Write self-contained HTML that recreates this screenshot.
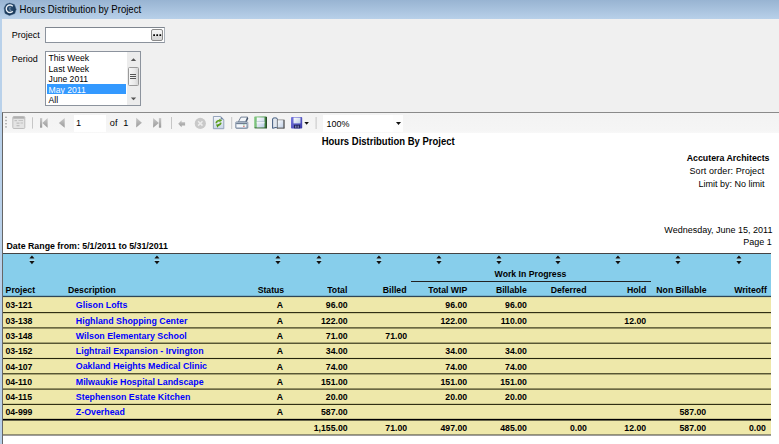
<!DOCTYPE html><html><head><meta charset="utf-8"><style>
*{margin:0;padding:0;box-sizing:border-box}
html,body{width:779px;height:444px;overflow:hidden;background:#fff;font-family:"Liberation Sans",sans-serif}
.t{position:absolute;white-space:nowrap}
.a{position:absolute}
</style></head><body>
<div class="a" style="left:0;top:0;width:779px;height:444px;background:#b9d1ea"></div>
<div class="a" style="left:0;top:0;width:779px;height:19px;background:linear-gradient(#98b4d2,#b8d0e9)"></div>
<svg class="a" style="left:0;top:0" width="20" height="19" viewBox="0 0 20 19"><defs><radialGradient id="ic" cx="0.45" cy="0.4" r="0.7"><stop offset="0" stop-color="#2f5479"/><stop offset="1" stop-color="#0f2d4d"/></radialGradient></defs><polygon points="9.6,3.1 14.4,4.6 16.1,9.2 14.8,13.6 9.4,15.5 5,13.4 4.1,8 6.1,4.3" fill="url(#ic)" stroke="#3d5d7d" stroke-width="0.5" stroke-linejoin="round"/><path d="M12.8,6.2 A3.75,3.75 0 1 0 12.8,11.2" stroke="#e9eff5" stroke-width="1.4" fill="none"/><path d="M10.2,6.9 q-0.9,1.8 0,3.8 h1.2" stroke="#9fb0c2" stroke-width="0.8" fill="none"/></svg>
<div class="t" style="left:19.6px;top:5.42px;font-size:9.6px;line-height:9.6px;font-weight:normal;color:#000;transform:scaleY(1.1);transform-origin:0 8.13px;">Hours Distribution by Project</div>
<div class="a" style="left:2px;top:19px;width:777px;height:425px;background:#f0f0f0"></div>
<div class="t" style="left:11.8px;top:30.78px;font-size:9.0px;line-height:9.0px;font-weight:normal;color:#000;transform:scaleY(1.08);transform-origin:0 7.62px;">Project</div>
<div class="t" style="left:11.8px;top:54.58px;font-size:9.0px;line-height:9.0px;font-weight:normal;color:#000;transform:scaleY(1.06);transform-origin:0 7.62px;">Period</div>
<div class="a" style="left:45px;top:27px;width:120px;height:16px;background:#fff;border:1px solid #8c939d;border-top-color:#7f868f;border-right-color:#a9b0b8"></div>
<div class="a" style="left:151.2px;top:28.7px;width:12.1px;height:12px;border:1px solid #8a8a8a;border-radius:2px;background:linear-gradient(#f5f5f5,#ececec 55%,#dadada 56%,#d8d8d8)"></div>
<svg class="a" style="left:150px;top:30px" width="15" height="10" viewBox="150 30 15 10"><g fill="#000"><rect x="153.2" y="34.2" width="1.8" height="1.9" rx="0.4"/><rect x="156.3" y="34.2" width="1.8" height="1.9" rx="0.4"/><rect x="159.4" y="34.2" width="1.8" height="1.9" rx="0.4"/></g></svg>
<div class="a" style="left:45px;top:51px;width:96px;height:55px;background:#fff;border:1px solid #8c939d"></div>
<div class="a" style="left:47px;top:84px;width:79px;height:10px;background:#3399ff"></div>
<div class="t" style="left:48.6px;top:54.02px;font-size:8.6px;line-height:8.6px;font-weight:normal;color:#000;transform:scaleY(1.12);transform-origin:0 7.28px;">This Week</div>
<div class="t" style="left:48.6px;top:64.52px;font-size:8.6px;line-height:8.6px;font-weight:normal;color:#000;transform:scaleY(1.12);transform-origin:0 7.28px;">Last Week</div>
<div class="t" style="left:48.6px;top:75.02px;font-size:8.6px;line-height:8.6px;font-weight:normal;color:#000;transform:scaleY(1.12);transform-origin:0 7.28px;">June 2011</div>
<div class="t" style="left:48.6px;top:85.52px;font-size:8.6px;line-height:8.6px;font-weight:normal;color:#fff;transform:scaleY(1.12);transform-origin:0 7.28px;">May 2011</div>
<div class="t" style="left:48.6px;top:96.02px;font-size:8.6px;line-height:8.6px;font-weight:normal;color:#000;transform:scaleY(1.12);transform-origin:0 7.28px;">All</div>
<div class="a" style="left:127px;top:52px;width:13px;height:53px;background:#ececec"></div>
<div class="a" style="left:127.5px;top:67px;width:11px;height:18.7px;border:1px solid #9a9a9a;border-radius:1.5px;background:linear-gradient(90deg,#f6f6f6,#e9e9e9 60%,#d6d6d6)"></div>
<div class="a" style="left:130px;top:73.5px;width:5.5px;height:0.9px;background:#555"></div><div class="a" style="left:130px;top:75.6px;width:5.5px;height:0.9px;background:#555"></div><div class="a" style="left:130px;top:77.7px;width:5.5px;height:0.9px;background:#555"></div>
<svg class="a" style="left:128px;top:56px" width="11" height="8"><polygon points="2.8,5 5.5,2.3 8.2,5" fill="#555"/></svg>
<svg class="a" style="left:128px;top:95px" width="11" height="8"><polygon points="2.8,2.6 5.5,5.3 8.2,2.6" fill="#555"/></svg>
<div class="a" style="left:2px;top:112px;width:777px;height:332px;background:#fff;border-left:1px solid #666;border-top:1px solid #8a8a8a"></div>
<div class="a" style="left:3px;top:113px;width:776px;height:20px;background:linear-gradient(#f3f3f3,#f5f5f5 85%,#f8f8f8)"></div>
<div class="a" style="left:74px;top:114.6px;width:32px;height:17.7px;background:#fff"></div>
<div class="a" style="left:323.4px;top:114.5px;width:80px;height:17.2px;background:#fdfdfd"></div>
<div class="a" style="left:323.4px;top:114.5px;width:70px;height:17.2px;background:#fff"></div>
<div class="t" style="left:76.0px;top:118.61px;font-size:9.2px;line-height:9.2px;font-weight:normal;color:#000;transform:scaleY(1.06);transform-origin:0 7.79px;">1</div>
<div class="t" style="left:109.8px;top:118.61px;font-size:9.2px;line-height:9.2px;font-weight:normal;color:#000;transform:scaleY(1.08);transform-origin:0 7.79px;">of</div>
<div class="t" style="left:123.2px;top:118.61px;font-size:9.2px;line-height:9.2px;font-weight:normal;color:#000;transform:scaleY(1.06);transform-origin:0 7.79px;">1</div>
<div class="t" style="left:326.6px;top:119.68px;font-size:9.0px;line-height:9.0px;font-weight:normal;color:#000;transform:scaleY(1.1);transform-origin:0 7.62px;">100%</div>
<svg class="a" style="left:0;top:0" width="420" height="140" viewBox="0 0 420 140">
<defs>
<linearGradient id="gg" x1="0" y1="0" x2="0" y2="1"><stop offset="0" stop-color="#c8c8c8"/><stop offset="1" stop-color="#9a9a9a"/></linearGradient>
<linearGradient id="pb" x1="0" y1="0" x2="0" y2="1"><stop offset="0" stop-color="#f4f7fb"/><stop offset="1" stop-color="#c9d6e8"/></linearGradient>
</defs>
<g fill="#9c9c9c"><rect x="5.3" y="116.6" width="1.4" height="1.4"/><rect x="5.3" y="119.8" width="1.4" height="1.4"/><rect x="5.3" y="123" width="1.4" height="1.4"/><rect x="5.3" y="126.2" width="1.4" height="1.4"/></g>
<rect x="12.8" y="116.5" width="12" height="12" rx="1" fill="#e4e4e4" stroke="#b8b8b8" stroke-width="0.9"/>
<rect x="13.2" y="116.9" width="11.2" height="1.8" fill="#b0b0b0"/>
<g fill="#c0c0c0"><rect x="14.5" y="120" width="2.5" height="1.2"/><rect x="18.5" y="120" width="4.5" height="0.9"/><rect x="16.5" y="122.5" width="3" height="1.3"/><rect x="20.5" y="122.5" width="2.5" height="1"/><rect x="16.5" y="125" width="3" height="1.3"/></g>
<g fill="#c6c6c6"><rect x="32" y="117.3" width="1" height="11.3"/><rect x="171" y="117" width="1" height="12"/><rect x="231.2" y="117" width="1" height="12"/><rect x="315.6" y="117" width="1" height="12"/></g>
<g fill="url(#gg)">
<rect x="40" y="118.1" width="2.2" height="9.6"/><polygon points="47.6,118.1 42.3,122.9 47.6,127.7"/>
<polygon points="64.7,118.1 58.8,122.9 64.7,127.7"/>
<polygon points="136.2,117.8 141.9,122.7 136.2,127.6"/>
<polygon points="153.1,118.1 158.9,122.9 153.1,127.7"/><rect x="158.9" y="118.1" width="2.3" height="9.6"/>
<polygon points="178.2,123.8 181.6,120.3 181.6,122.2 185.1,122.2 185.1,125.4 181.6,125.4 181.6,127.3"/>
</g>
<circle cx="200.3" cy="123.4" r="5.6" fill="#c9c9c9"/>
<path d="M198.1,121.2 L202.5,125.6 M202.5,121.2 L198.1,125.6" stroke="#ececec" stroke-width="1.5"/>
<path d="M213.4,116.5 h7.3 l3.1,3.1 v9.1 h-10.4 z" fill="url(#pb)" stroke="#8c9cb4" stroke-width="0.9"/>
<polygon points="220.7,116.5 223.8,119.6 220.7,119.6" fill="#7486a0"/>
<path d="M216.2,123.2 q0.2,-2.6 3.6,-2.7" stroke="#5e9f1e" stroke-width="1.6" fill="none"/>
<polygon points="219.4,118.7 222.1,120.5 219.4,122.3" fill="#5e9f1e"/>
<path d="M220.9,122.6 q-0.3,2.3 -3.2,2.6" stroke="#5e9f1e" stroke-width="1.6" fill="none"/>
<polygon points="215.9,124.6 219.3,124.6 217.6,127.7" fill="#4f9414"/>
<linearGradient id="prb" x1="0" y1="0" x2="0" y2="1"><stop offset="0" stop-color="#d3dce6"/><stop offset="1" stop-color="#8d9db2"/></linearGradient>
<linearGradient id="plin" x1="0" y1="0" x2="1" y2="1"><stop offset="0" stop-color="#ffffff"/><stop offset="1" stop-color="#b9cbe4"/></linearGradient>
<linearGradient id="flp" x1="0" y1="0" x2="1" y2="1"><stop offset="0" stop-color="#7878e0"/><stop offset="1" stop-color="#3a3aa8"/></linearGradient>
<linearGradient id="grn" x1="0" y1="0" x2="1" y2="0"><stop offset="0" stop-color="#86c986"/><stop offset="0.5" stop-color="#5aa95a"/><stop offset="1" stop-color="#3b7d3b"/></linearGradient>
<polygon points="240.9,117.1 247.6,117.1 245.4,121.9 238.3,121.9" fill="#f2f5f9" stroke="#55667d" stroke-width="0.8" stroke-linejoin="round"/>
<polygon points="247.4,117.2 248.3,118.2 246.6,122.2 245.6,121.9" fill="#3f4f66"/>
<rect x="235.6" y="121.7" width="12.3" height="6.8" rx="1.2" fill="url(#prb)" stroke="#6d7e95" stroke-width="0.6"/>
<rect x="236.2" y="122.2" width="11.2" height="1.9" fill="#9eacbd"/><rect x="236.2" y="123.3" width="10.8" height="0.8" fill="#5a6a80"/>
<rect x="236.6" y="124.3" width="9.6" height="3.1" fill="#f4f7fb"/>
<rect x="243.4" y="124.5" width="1" height="0.9" fill="#4fae4f"/><rect x="243.4" y="125.8" width="1" height="1.2" fill="#d23a3a"/>
<rect x="254.2" y="116.4" width="12.6" height="11.9" rx="0.8" fill="url(#grn)"/>
<rect x="265.9" y="117" width="0.9" height="11.3" fill="#1e3a1e"/>
<rect x="254.6" y="127.5" width="12.2" height="0.8" fill="#2e4e2e"/>
<rect x="256.7" y="117.4" width="7.8" height="10" fill="url(#plin)"/>
<rect x="256.7" y="121.6" width="7.8" height="0.7" fill="#9aaabb"/><rect x="256.7" y="122.3" width="7.8" height="0.9" fill="#ffffff"/>
<path d="M272.6,128.3 v-9.3 q0.2,-1.2 1.6,-1.1 h1.6 q1.4,0 1.6,1.3 v9.1 q-1.2,-1.4 -2.4,-0.6 z" fill="#e2e7ee" stroke="#2c4a70" stroke-width="0.9" stroke-linejoin="round"/>
<rect x="277.4" y="119.9" width="6.8" height="8.3" fill="url(#plin)" stroke="#6e6e6e" stroke-width="0.6"/>
<rect x="283.4" y="120" width="1" height="8.3" fill="#505050"/><rect x="277" y="127.6" width="7.4" height="0.8" fill="#606060"/>
<rect x="291" y="117" width="11.2" height="11.5" rx="0.8" fill="url(#flp)"/>
<rect x="293.5" y="117.6" width="7" height="5.8" fill="url(#plin)"/>
<rect x="294" y="124.8" width="6" height="3.5" fill="#1f2360"/><rect x="295.2" y="125.6" width="1.2" height="2.2" fill="#8a8fb8"/><rect x="297.6" y="125.6" width="1.2" height="2.2" fill="#8a8fb8"/>
<polygon points="304.4,122 308.9,122 306.65,124.7" fill="#111"/>
<polygon points="396,121.9 401,121.9 398.5,124.9" fill="#111"/>
</svg>
<div class="t" style="left:321.7px;top:136.96px;font-size:9.5px;line-height:9.5px;font-weight:bold;color:#000;transform:scaleY(1.1);transform-origin:0 8.04px;">Hours Distribution By Project</div>
<div class="t" style="right:9.5px;top:153.85px;font-size:8.8px;line-height:8.8px;font-weight:bold;color:#000;transform:scaleY(1.1);transform-origin:0 7.45px;">Accutera Architects</div>
<div class="t" style="right:14.600000000000023px;top:167.28px;font-size:9.0px;line-height:9.0px;font-weight:normal;color:#000;letter-spacing:0.1px;transform:scaleY(1.1);transform-origin:0 7.62px;">Sort order: Project</div>
<div class="t" style="right:14.600000000000023px;top:180.28px;font-size:9.0px;line-height:9.0px;font-weight:normal;color:#000;transform:scaleY(1.1);transform-origin:0 7.62px;">Limit by: No limit</div>
<div class="t" style="right:6.600000000000023px;top:226.38px;font-size:9.0px;line-height:9.0px;font-weight:normal;color:#000;transform:scaleY(1.1);transform-origin:0 7.62px;">Wednesday, June 15, 2011</div>
<div class="t" style="right:7.2999999999999545px;top:238.18px;font-size:9.0px;line-height:9.0px;font-weight:normal;color:#000;transform:scaleY(1.1);transform-origin:0 7.62px;">Page 1</div>
<div class="t" style="left:6.5px;top:241.95px;font-size:8.8px;line-height:8.8px;font-weight:bold;color:#000;transform:scaleY(1.1);transform-origin:0 7.45px;">Date Range from: 5/1/2011 to 5/31/2011</div>
<div class="a" style="left:3px;top:253px;width:768px;height:44px;background:#87ceeb;border-top:1px solid #444"></div>
<div class="a" style="left:3px;top:297px;width:768px;height:138px;background:#eee8aa"></div>
<svg class="a" style="left:29.2px;top:255px" width="6" height="10"><rect x="0" y="3.4" width="6" height="0.7" fill="#fff" fill-opacity="0.45"/><rect x="0" y="5.4" width="6" height="0.7" fill="#fff" fill-opacity="0.45"/><polygon points="0.3,3.5 2.95,0.6 5.6,3.5" fill="#111"/><polygon points="0.3,6.1 5.6,6.1 2.95,9.2" fill="#111"/></svg>
<svg class="a" style="left:154.0px;top:255px" width="6" height="10"><rect x="0" y="3.4" width="6" height="0.7" fill="#fff" fill-opacity="0.45"/><rect x="0" y="5.4" width="6" height="0.7" fill="#fff" fill-opacity="0.45"/><polygon points="0.3,3.5 2.95,0.6 5.6,3.5" fill="#111"/><polygon points="0.3,6.1 5.6,6.1 2.95,9.2" fill="#111"/></svg>
<svg class="a" style="left:275.2px;top:255px" width="6" height="10"><rect x="0" y="3.4" width="6" height="0.7" fill="#fff" fill-opacity="0.45"/><rect x="0" y="5.4" width="6" height="0.7" fill="#fff" fill-opacity="0.45"/><polygon points="0.3,3.5 2.95,0.6 5.6,3.5" fill="#111"/><polygon points="0.3,6.1 5.6,6.1 2.95,9.2" fill="#111"/></svg>
<svg class="a" style="left:316.0px;top:255px" width="6" height="10"><rect x="0" y="3.4" width="6" height="0.7" fill="#fff" fill-opacity="0.45"/><rect x="0" y="5.4" width="6" height="0.7" fill="#fff" fill-opacity="0.45"/><polygon points="0.3,3.5 2.95,0.6 5.6,3.5" fill="#111"/><polygon points="0.3,6.1 5.6,6.1 2.95,9.2" fill="#111"/></svg>
<svg class="a" style="left:375.9px;top:255px" width="6" height="10"><rect x="0" y="3.4" width="6" height="0.7" fill="#fff" fill-opacity="0.45"/><rect x="0" y="5.4" width="6" height="0.7" fill="#fff" fill-opacity="0.45"/><polygon points="0.3,3.5 2.95,0.6 5.6,3.5" fill="#111"/><polygon points="0.3,6.1 5.6,6.1 2.95,9.2" fill="#111"/></svg>
<svg class="a" style="left:436.0px;top:255px" width="6" height="10"><rect x="0" y="3.4" width="6" height="0.7" fill="#fff" fill-opacity="0.45"/><rect x="0" y="5.4" width="6" height="0.7" fill="#fff" fill-opacity="0.45"/><polygon points="0.3,3.5 2.95,0.6 5.6,3.5" fill="#111"/><polygon points="0.3,6.1 5.6,6.1 2.95,9.2" fill="#111"/></svg>
<svg class="a" style="left:495.9px;top:255px" width="6" height="10"><rect x="0" y="3.4" width="6" height="0.7" fill="#fff" fill-opacity="0.45"/><rect x="0" y="5.4" width="6" height="0.7" fill="#fff" fill-opacity="0.45"/><polygon points="0.3,3.5 2.95,0.6 5.6,3.5" fill="#111"/><polygon points="0.3,6.1 5.6,6.1 2.95,9.2" fill="#111"/></svg>
<svg class="a" style="left:555.3px;top:255px" width="6" height="10"><rect x="0" y="3.4" width="6" height="0.7" fill="#fff" fill-opacity="0.45"/><rect x="0" y="5.4" width="6" height="0.7" fill="#fff" fill-opacity="0.45"/><polygon points="0.3,3.5 2.95,0.6 5.6,3.5" fill="#111"/><polygon points="0.3,6.1 5.6,6.1 2.95,9.2" fill="#111"/></svg>
<svg class="a" style="left:615.0px;top:255px" width="6" height="10"><rect x="0" y="3.4" width="6" height="0.7" fill="#fff" fill-opacity="0.45"/><rect x="0" y="5.4" width="6" height="0.7" fill="#fff" fill-opacity="0.45"/><polygon points="0.3,3.5 2.95,0.6 5.6,3.5" fill="#111"/><polygon points="0.3,6.1 5.6,6.1 2.95,9.2" fill="#111"/></svg>
<svg class="a" style="left:675.3px;top:255px" width="6" height="10"><rect x="0" y="3.4" width="6" height="0.7" fill="#fff" fill-opacity="0.45"/><rect x="0" y="5.4" width="6" height="0.7" fill="#fff" fill-opacity="0.45"/><polygon points="0.3,3.5 2.95,0.6 5.6,3.5" fill="#111"/><polygon points="0.3,6.1 5.6,6.1 2.95,9.2" fill="#111"/></svg>
<svg class="a" style="left:735.5px;top:255px" width="6" height="10"><rect x="0" y="3.4" width="6" height="0.7" fill="#fff" fill-opacity="0.45"/><rect x="0" y="5.4" width="6" height="0.7" fill="#fff" fill-opacity="0.45"/><polygon points="0.3,3.5 2.95,0.6 5.6,3.5" fill="#111"/><polygon points="0.3,6.1 5.6,6.1 2.95,9.2" fill="#111"/></svg>
<div class="t" style="left:5.6px;top:285.54px;font-size:8.7px;line-height:8.7px;font-weight:bold;color:#000;transform:scaleY(1.1);transform-origin:0 7.36px;">Project</div>
<div class="t" style="left:68px;top:285.54px;font-size:8.7px;line-height:8.7px;font-weight:bold;color:#000;transform:scaleY(1.1);transform-origin:0 7.36px;">Description</div>
<div class="t" style="right:494.8px;top:285.54px;font-size:8.7px;line-height:8.7px;font-weight:bold;color:#000;transform:scaleY(1.1);transform-origin:0 7.36px;">Status</div>
<div class="t" style="right:431.7px;top:285.54px;font-size:8.7px;line-height:8.7px;font-weight:bold;color:#000;transform:scaleY(1.1);transform-origin:0 7.36px;">Total</div>
<div class="t" style="right:372.5px;top:285.54px;font-size:8.7px;line-height:8.7px;font-weight:bold;color:#000;transform:scaleY(1.1);transform-origin:0 7.36px;">Billed</div>
<div class="t" style="right:311.8px;top:285.54px;font-size:8.7px;line-height:8.7px;font-weight:bold;color:#000;transform:scaleY(1.1);transform-origin:0 7.36px;">Total WIP</div>
<div class="t" style="right:252.20000000000005px;top:285.54px;font-size:8.7px;line-height:8.7px;font-weight:bold;color:#000;transform:scaleY(1.1);transform-origin:0 7.36px;">Billable</div>
<div class="t" style="right:192.5px;top:285.54px;font-size:8.7px;line-height:8.7px;font-weight:bold;color:#000;transform:scaleY(1.1);transform-origin:0 7.36px;">Deferred</div>
<div class="t" style="right:132.79999999999995px;top:285.54px;font-size:8.7px;line-height:8.7px;font-weight:bold;color:#000;transform:scaleY(1.1);transform-origin:0 7.36px;">Hold</div>
<div class="t" style="right:72.5px;top:285.54px;font-size:8.7px;line-height:8.7px;font-weight:bold;color:#000;transform:scaleY(1.1);transform-origin:0 7.36px;">Non Billable</div>
<div class="t" style="right:12.200000000000045px;top:285.54px;font-size:8.7px;line-height:8.7px;font-weight:bold;color:#000;transform:scaleY(1.1);transform-origin:0 7.36px;">Writeoff</div>
<div class="t" style="left:494.6px;top:270.34px;font-size:8.7px;line-height:8.7px;font-weight:bold;color:#000;transform:scaleY(1.1);transform-origin:0 7.36px;">Work In Progress</div>
<div class="a" style="left:410.7px;top:281px;width:240px;height:1px;background:#222"></div>
<div class="t" style="left:5.4px;top:301.34px;font-size:8.7px;line-height:8.7px;font-weight:bold;color:#000;transform:scaleY(1.1);transform-origin:0 7.36px;">03-121</div>
<div class="t" style="left:75.8px;top:301.21px;font-size:8.85px;line-height:8.85px;font-weight:bold;color:#0000ff;transform:scaleY(1.1);transform-origin:0 7.49px;">Glison Lofts</div>
<div class="t" style="right:495.9px;top:301.34px;font-size:8.7px;line-height:8.7px;font-weight:bold;color:#000;transform:scaleY(1.1);transform-origin:0 7.36px;">A</div>
<div class="t" style="right:431.4px;top:301.34px;font-size:8.7px;line-height:8.7px;font-weight:bold;color:#000;transform:scaleY(1.1);transform-origin:0 7.36px;">96.00</div>
<div class="t" style="right:311.9px;top:301.34px;font-size:8.7px;line-height:8.7px;font-weight:bold;color:#000;transform:scaleY(1.1);transform-origin:0 7.36px;">96.00</div>
<div class="t" style="right:252.20000000000005px;top:301.34px;font-size:8.7px;line-height:8.7px;font-weight:bold;color:#000;transform:scaleY(1.1);transform-origin:0 7.36px;">96.00</div>
<div class="t" style="left:5.4px;top:316.64px;font-size:8.7px;line-height:8.7px;font-weight:bold;color:#000;transform:scaleY(1.1);transform-origin:0 7.36px;">03-138</div>
<div class="t" style="left:75.8px;top:316.51px;font-size:8.85px;line-height:8.85px;font-weight:bold;color:#0000ff;transform:scaleY(1.1);transform-origin:0 7.49px;">Highland Shopping Center</div>
<div class="t" style="right:495.9px;top:316.64px;font-size:8.7px;line-height:8.7px;font-weight:bold;color:#000;transform:scaleY(1.1);transform-origin:0 7.36px;">A</div>
<div class="t" style="right:431.4px;top:316.64px;font-size:8.7px;line-height:8.7px;font-weight:bold;color:#000;transform:scaleY(1.1);transform-origin:0 7.36px;">122.00</div>
<div class="t" style="right:311.9px;top:316.64px;font-size:8.7px;line-height:8.7px;font-weight:bold;color:#000;transform:scaleY(1.1);transform-origin:0 7.36px;">122.00</div>
<div class="t" style="right:252.20000000000005px;top:316.64px;font-size:8.7px;line-height:8.7px;font-weight:bold;color:#000;transform:scaleY(1.1);transform-origin:0 7.36px;">110.00</div>
<div class="t" style="right:132.89999999999998px;top:316.64px;font-size:8.7px;line-height:8.7px;font-weight:bold;color:#000;transform:scaleY(1.1);transform-origin:0 7.36px;">12.00</div>
<div class="t" style="left:5.4px;top:331.94px;font-size:8.7px;line-height:8.7px;font-weight:bold;color:#000;transform:scaleY(1.1);transform-origin:0 7.36px;">03-148</div>
<div class="t" style="left:75.8px;top:331.81px;font-size:8.85px;line-height:8.85px;font-weight:bold;color:#0000ff;transform:scaleY(1.1);transform-origin:0 7.49px;">Wilson Elementary School</div>
<div class="t" style="right:495.9px;top:331.94px;font-size:8.7px;line-height:8.7px;font-weight:bold;color:#000;transform:scaleY(1.1);transform-origin:0 7.36px;">A</div>
<div class="t" style="right:431.4px;top:331.94px;font-size:8.7px;line-height:8.7px;font-weight:bold;color:#000;transform:scaleY(1.1);transform-origin:0 7.36px;">71.00</div>
<div class="t" style="right:371.9px;top:331.94px;font-size:8.7px;line-height:8.7px;font-weight:bold;color:#000;transform:scaleY(1.1);transform-origin:0 7.36px;">71.00</div>
<div class="t" style="left:5.4px;top:347.24px;font-size:8.7px;line-height:8.7px;font-weight:bold;color:#000;transform:scaleY(1.1);transform-origin:0 7.36px;">03-152</div>
<div class="t" style="left:75.8px;top:347.11px;font-size:8.85px;line-height:8.85px;font-weight:bold;color:#0000ff;transform:scaleY(1.1);transform-origin:0 7.49px;">Lightrail Expansion - Irvington</div>
<div class="t" style="right:495.9px;top:347.24px;font-size:8.7px;line-height:8.7px;font-weight:bold;color:#000;transform:scaleY(1.1);transform-origin:0 7.36px;">A</div>
<div class="t" style="right:431.4px;top:347.24px;font-size:8.7px;line-height:8.7px;font-weight:bold;color:#000;transform:scaleY(1.1);transform-origin:0 7.36px;">34.00</div>
<div class="t" style="right:311.9px;top:347.24px;font-size:8.7px;line-height:8.7px;font-weight:bold;color:#000;transform:scaleY(1.1);transform-origin:0 7.36px;">34.00</div>
<div class="t" style="right:252.20000000000005px;top:347.24px;font-size:8.7px;line-height:8.7px;font-weight:bold;color:#000;transform:scaleY(1.1);transform-origin:0 7.36px;">34.00</div>
<div class="t" style="left:5.4px;top:362.54px;font-size:8.7px;line-height:8.7px;font-weight:bold;color:#000;transform:scaleY(1.1);transform-origin:0 7.36px;">04-107</div>
<div class="t" style="left:75.8px;top:362.41px;font-size:8.85px;line-height:8.85px;font-weight:bold;color:#0000ff;transform:scaleY(1.1);transform-origin:0 7.49px;">Oakland Heights Medical Clinic</div>
<div class="t" style="right:495.9px;top:362.54px;font-size:8.7px;line-height:8.7px;font-weight:bold;color:#000;transform:scaleY(1.1);transform-origin:0 7.36px;">A</div>
<div class="t" style="right:431.4px;top:362.54px;font-size:8.7px;line-height:8.7px;font-weight:bold;color:#000;transform:scaleY(1.1);transform-origin:0 7.36px;">74.00</div>
<div class="t" style="right:311.9px;top:362.54px;font-size:8.7px;line-height:8.7px;font-weight:bold;color:#000;transform:scaleY(1.1);transform-origin:0 7.36px;">74.00</div>
<div class="t" style="right:252.20000000000005px;top:362.54px;font-size:8.7px;line-height:8.7px;font-weight:bold;color:#000;transform:scaleY(1.1);transform-origin:0 7.36px;">74.00</div>
<div class="t" style="left:5.4px;top:377.84px;font-size:8.7px;line-height:8.7px;font-weight:bold;color:#000;transform:scaleY(1.1);transform-origin:0 7.36px;">04-110</div>
<div class="t" style="left:75.8px;top:377.71px;font-size:8.85px;line-height:8.85px;font-weight:bold;color:#0000ff;transform:scaleY(1.1);transform-origin:0 7.49px;">Milwaukie Hospital Landscape</div>
<div class="t" style="right:495.9px;top:377.84px;font-size:8.7px;line-height:8.7px;font-weight:bold;color:#000;transform:scaleY(1.1);transform-origin:0 7.36px;">A</div>
<div class="t" style="right:431.4px;top:377.84px;font-size:8.7px;line-height:8.7px;font-weight:bold;color:#000;transform:scaleY(1.1);transform-origin:0 7.36px;">151.00</div>
<div class="t" style="right:311.9px;top:377.84px;font-size:8.7px;line-height:8.7px;font-weight:bold;color:#000;transform:scaleY(1.1);transform-origin:0 7.36px;">151.00</div>
<div class="t" style="right:252.20000000000005px;top:377.84px;font-size:8.7px;line-height:8.7px;font-weight:bold;color:#000;transform:scaleY(1.1);transform-origin:0 7.36px;">151.00</div>
<div class="t" style="left:5.4px;top:393.14px;font-size:8.7px;line-height:8.7px;font-weight:bold;color:#000;transform:scaleY(1.1);transform-origin:0 7.36px;">04-115</div>
<div class="t" style="left:75.8px;top:393.01px;font-size:8.85px;line-height:8.85px;font-weight:bold;color:#0000ff;transform:scaleY(1.1);transform-origin:0 7.49px;">Stephenson Estate Kitchen</div>
<div class="t" style="right:495.9px;top:393.14px;font-size:8.7px;line-height:8.7px;font-weight:bold;color:#000;transform:scaleY(1.1);transform-origin:0 7.36px;">A</div>
<div class="t" style="right:431.4px;top:393.14px;font-size:8.7px;line-height:8.7px;font-weight:bold;color:#000;transform:scaleY(1.1);transform-origin:0 7.36px;">20.00</div>
<div class="t" style="right:311.9px;top:393.14px;font-size:8.7px;line-height:8.7px;font-weight:bold;color:#000;transform:scaleY(1.1);transform-origin:0 7.36px;">20.00</div>
<div class="t" style="right:252.20000000000005px;top:393.14px;font-size:8.7px;line-height:8.7px;font-weight:bold;color:#000;transform:scaleY(1.1);transform-origin:0 7.36px;">20.00</div>
<div class="t" style="left:5.4px;top:408.44px;font-size:8.7px;line-height:8.7px;font-weight:bold;color:#000;transform:scaleY(1.1);transform-origin:0 7.36px;">04-999</div>
<div class="t" style="left:75.8px;top:408.31px;font-size:8.85px;line-height:8.85px;font-weight:bold;color:#0000ff;transform:scaleY(1.1);transform-origin:0 7.49px;">Z-Overhead</div>
<div class="t" style="right:495.9px;top:408.44px;font-size:8.7px;line-height:8.7px;font-weight:bold;color:#000;transform:scaleY(1.1);transform-origin:0 7.36px;">A</div>
<div class="t" style="right:431.4px;top:408.44px;font-size:8.7px;line-height:8.7px;font-weight:bold;color:#000;transform:scaleY(1.1);transform-origin:0 7.36px;">587.00</div>
<div class="t" style="right:72.89999999999998px;top:408.44px;font-size:8.7px;line-height:8.7px;font-weight:bold;color:#000;transform:scaleY(1.1);transform-origin:0 7.36px;">587.00</div>
<div class="t" style="right:431.4px;top:423.74px;font-size:8.7px;line-height:8.7px;font-weight:bold;color:#000;transform:scaleY(1.1);transform-origin:0 7.36px;">1,155.00</div>
<div class="t" style="right:371.9px;top:423.74px;font-size:8.7px;line-height:8.7px;font-weight:bold;color:#000;transform:scaleY(1.1);transform-origin:0 7.36px;">71.00</div>
<div class="t" style="right:311.9px;top:423.74px;font-size:8.7px;line-height:8.7px;font-weight:bold;color:#000;transform:scaleY(1.1);transform-origin:0 7.36px;">497.00</div>
<div class="t" style="right:252.20000000000005px;top:423.74px;font-size:8.7px;line-height:8.7px;font-weight:bold;color:#000;transform:scaleY(1.1);transform-origin:0 7.36px;">485.00</div>
<div class="t" style="right:192.20000000000005px;top:423.74px;font-size:8.7px;line-height:8.7px;font-weight:bold;color:#000;transform:scaleY(1.1);transform-origin:0 7.36px;">0.00</div>
<div class="t" style="right:132.89999999999998px;top:423.74px;font-size:8.7px;line-height:8.7px;font-weight:bold;color:#000;transform:scaleY(1.1);transform-origin:0 7.36px;">12.00</div>
<div class="t" style="right:72.89999999999998px;top:423.74px;font-size:8.7px;line-height:8.7px;font-weight:bold;color:#000;transform:scaleY(1.1);transform-origin:0 7.36px;">587.00</div>
<div class="t" style="right:13.200000000000045px;top:423.74px;font-size:8.7px;line-height:8.7px;font-weight:bold;color:#000;transform:scaleY(1.1);transform-origin:0 7.36px;">0.00</div>
<svg class="a" style="left:0;top:0" width="779" height="444"><rect x="3" y="295.8" width="768" height="1.3" fill="#2e4656" shape-rendering="geometricPrecision"/><rect x="3" y="312.05" width="768" height="1.1" fill="#26260c" shape-rendering="geometricPrecision"/><rect x="3" y="327.35" width="768" height="1.1" fill="#26260c" shape-rendering="geometricPrecision"/><rect x="3" y="342.65" width="768" height="1.1" fill="#26260c" shape-rendering="geometricPrecision"/><rect x="3" y="357.95" width="768" height="1.1" fill="#26260c" shape-rendering="geometricPrecision"/><rect x="3" y="373.25" width="768" height="1.1" fill="#26260c" shape-rendering="geometricPrecision"/><rect x="3" y="388.55" width="768" height="1.1" fill="#26260c" shape-rendering="geometricPrecision"/><rect x="3" y="403.85" width="768" height="1.1" fill="#26260c" shape-rendering="geometricPrecision"/><rect x="3" y="418.85" width="768" height="1.7" fill="#000" shape-rendering="geometricPrecision"/><rect x="3" y="434.50" width="768" height="1" fill="#3a3a3a" shape-rendering="geometricPrecision"/></svg>
</body></html>
